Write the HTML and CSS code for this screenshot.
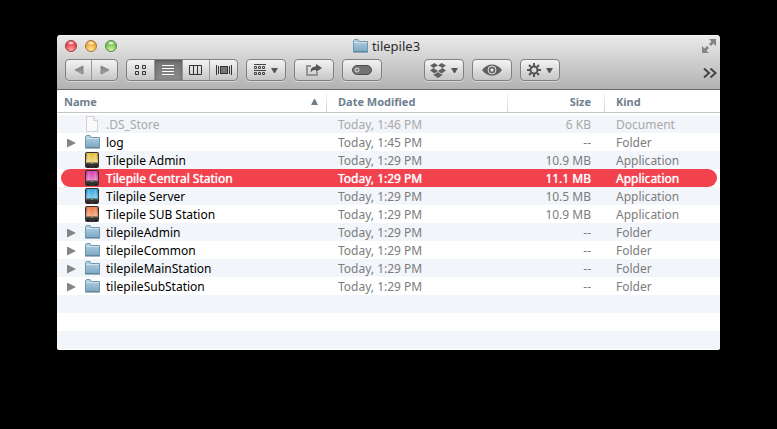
FILE: index.html
```html
<!DOCTYPE html>
<html lang="en">
<head>
<meta charset="utf-8">
<title>tilepile3</title>
<link rel="stylesheet" href="styles.css">
</head>
<body>
<svg class="defs" aria-hidden="true">
  <defs>
    <linearGradient id="folderFill" x1="0" y1="0" x2="0" y2="1"><stop offset="0" stop-color="#b4d2e4"/><stop offset="1" stop-color="#7da9c4"/></linearGradient>
    <linearGradient id="arrowFill" x1="0" y1="0" x2="0" y2="1"><stop offset="0" stop-color="#777"/><stop offset="1" stop-color="#aaa"/></linearGradient>
    <linearGradient id="shine" x1="0" y1="0" x2="0" y2="1"><stop offset="0" stop-color="#fff" stop-opacity="0"/><stop offset="1" stop-color="#fff" stop-opacity=".4"/></linearGradient>
    <symbol id="folder" viewBox="0 0 16 16">
      <path d="M1.5 13.5V2.5L2.5 1.5H6L7 3.5H15.500V13.500Z" fill="url(#folderFill)" stroke="#7197ae"/>
      <path d="M2 4.500H15" stroke="#cfe3ee"/>
      <path d="M1 14H16" stroke="#53778f"/>
    </symbol>
    <symbol id="doc" viewBox="0 0 16 16">
      <path d="M2.500.5H9.500L13.500 4.500V15.500H2.500Z" fill="#fafafa" stroke="#d2d2d2"/>
      <path d="M9.500.5V4.500H13.500" fill="#eee" stroke="#d2d2d2"/>
    </symbol>
    <symbol id="drive" viewBox="0 0 16 16">
      <rect x="1" y="0" width="14" height="16" rx="2" fill="#34302f"/>
      <path d="M2.500 1H13.500L14 10.500H2Z" fill="currentColor"/>
      <path d="M2.500 1H13.500L14 10.500H2Z" fill="url(#shine)"/>
      <path d="M5 1.500V10M11 1.500V10" stroke="#fff" stroke-opacity=".25"/>
      <path d="M1.500 11.500H14.500" stroke="#4d4d4d"/>
      <path d="M7 11.500H9" stroke="#54a34c"/>
      <path d="M3 14.500H5M11 14.500H13" stroke="#111"/>
    </symbol>
  </defs>
</svg>
<main class="window">
  <header class="chrome">
    <div class="titlebar">
      <div class="lights">
        <button class="light close" aria-label="Close"></button>
        <button class="light minimize" aria-label="Minimize"></button>
        <button class="light zoom" aria-label="Zoom"></button>
      </div>
      <h1 class="title"><svg class="icon16"><use href="#folder"/></svg>tilepile3</h1>
      <button class="bare fullscreen" aria-label="Full screen">
        <svg width="14" height="14" viewBox="0 0 14 14" fill="#858585"><path d="M7 0H14V7L11.500 4.500L9 7L7 5L9.500 2.500ZM7 14H0V7L2.500 9.500L5 7L7 9L4.500 11.500Z"/></svg>
      </button>
    </div>
    <div class="toolbar">
      <div class="group nav">
        <button aria-label="Back"><svg width="10" height="10"><path d="M9 1V9L1 5Z" fill="url(#arrowFill)" stroke="#888"/></svg></button>
        <button aria-label="Forward"><svg width="10" height="10"><path d="M1 1V9L9 5Z" fill="url(#arrowFill)" stroke="#888"/></svg></button>
      </div>
      <div class="group views">
        <button aria-label="Icon view"><svg width="11" height="11" fill="none" stroke="#333"><path d="M.5.5h3v3h-3zM7.500.5h3v3h-3zM.5 6.500h3v3h-3zM7.500 6.500h3v3h-3z"/></svg></button>
        <button class="active" aria-label="List view" aria-pressed="true"><svg width="12" height="12" stroke="#fff"><path d="M0 1.500H12M0 4.500H12M0 7.500H12M0 10.500H12"/></svg></button>
        <button aria-label="Column view"><svg width="13" height="11" fill="none" stroke="#333"><path d="M.5.5h12v9H.5zM4.500.5v9M8.500.5v9"/></svg></button>
        <button aria-label="Cover flow view"><svg width="16" height="11" stroke="#333"><path d="M.5.0v10M2.500 1v8M13.500 1v8M15.500 0v10"/><rect x="4.500" y="1.500" width="7" height="7" fill="#777"/></svg></button>
      </div>
      <button class="tool" aria-label="Arrange">
        <svg width="12" height="12" fill="none" stroke="#444"><path d="M0 .5H12M0 6.500H12M.5 2.500h2v2h-2zM4.500 2.500h2v2h-2zM8.500 2.500h2v2h-2zM.5 8.500h2v2h-2zM4.500 8.500h2v2h-2zM8.500 8.500h2v2h-2z"/></svg>
        <svg class="caret" width="7" height="5"><path d="M0 0H7L4 5H3Z" fill="#555"/></svg>
      </button>
      <button class="tool" aria-label="Share">
        <svg width="16" height="14"><path d="M5 3H1V12H11V9" fill="none" stroke="#949494" stroke-width="2"/><path d="M10 1L16 5L10 9V7C7 6.500 5.500 8 5 9.500C4 5.500 6.500 3.500 10 3.500Z" fill="#565656"/></svg>
      </button>
      <button class="tool" aria-label="Edit tags">
        <svg width="20" height="10"><rect x=".5" y=".5" width="19" height="9" rx="4.500" fill="#737373" stroke="#4f4f4f"/><circle cx="5" cy="5" r="2" fill="#777" stroke="#e6e6e6"/></svg>
      </button>
      <button class="tool apart" aria-label="Dropbox">
        <svg width="16" height="15" fill="#606060"><path d="M0 2.500L4.500 0L8 2.500L3.500 5ZM16 2.500L11.500 0L8 2.500L12.500 5ZM0 7.500L3.500 5L8 8L4.500 10.500ZM16 7.500L12.500 5L8 8L11.500 10.500ZM3.500 11L4.500 11.500L8 9L11.500 11.500L12.500 11V12L8 15L3.500 12Z"/></svg>
        <svg class="caret" width="7" height="5"><path d="M0 0H7L4 5H3Z" fill="#555"/></svg>
      </button>
      <button class="tool" aria-label="Quick Look">
        <svg width="20" height="12"><path d="M0 6C5-1.500 15-1.500 20 6C15 13.500 5 13.500 0 6Z" fill="#606060"/><circle cx="10" cy="6" r="4" fill="#6a6a6a" stroke="#dcdcdc"/><circle cx="10" cy="6" r="1.500" fill="#eee"/></svg>
      </button>
      <button class="tool" aria-label="Action">
        <svg width="14" height="14" viewBox="-7 -7 14 14" fill="none" stroke="#555"><circle r="3.500" stroke-width="2"/><path stroke-width="2" d="M0-4V-7M0 4V7M4 0H7M-4 0H-7M3 3L5 5M-3-3L-5-5M3-3L5-5M-3 3L-5 5"/></svg>
        <svg class="caret" width="7" height="5"><path d="M0 0H7L4 5H3Z" fill="#555"/></svg>
      </button>
      <button class="bare more" aria-label="More toolbar items">
        <svg width="14" height="10" fill="none" stroke="#444" stroke-width="2"><path d="M1 .5L6 5L1 9.500M7.500.5L12.500 5L7.500 9.500"/></svg>
      </button>
    </div>
  </header>
  <table class="files">
    <colgroup><col><col class="c-date"><col class="c-size"><col class="c-kind"></colgroup>
    <thead>
      <tr>
        <th class="name" scope="col" aria-sort="ascending"><span class="sort">Name<svg width="7" height="6"><path d="M3 0H4L7 6H0Z" fill="#6f7f8e"/></svg></span></th>
        <th scope="col">Date Modified</th><th class="size" scope="col">Size</th><th scope="col">Kind</th>
      </tr>
    </thead>
    <tbody>
      <tr class="dim"><td><div class="entry"><span class="twist"></span><svg class="icon16"><use href="#doc"/></svg>.DS_Store</div></td><td>Today, 1:46 PM</td><td class="size">6 KB</td><td>Document</td></tr>
      <tr><td><div class="entry"><button class="twist" aria-label="Expand log"></button><svg class="icon16"><use href="#folder"/></svg>log</div></td><td>Today, 1:45 PM</td><td class="size">--</td><td>Folder</td></tr>
      <tr><td><div class="entry"><span class="twist"></span><svg class="icon16 yellow"><use href="#drive"/></svg>Tilepile Admin</div></td><td>Today, 1:29 PM</td><td class="size">10.9 MB</td><td>Application</td></tr>
      <tr class="selected" aria-selected="true"><td><div class="entry"><span class="twist"></span><svg class="icon16 pink"><use href="#drive"/></svg>Tilepile Central Station</div></td><td>Today, 1:29 PM</td><td class="size">11.1 MB</td><td>Application</td></tr>
      <tr><td><div class="entry"><span class="twist"></span><svg class="icon16 blue"><use href="#drive"/></svg>Tilepile Server</div></td><td>Today, 1:29 PM</td><td class="size">10.5 MB</td><td>Application</td></tr>
      <tr><td><div class="entry"><span class="twist"></span><svg class="icon16 orange"><use href="#drive"/></svg>Tilepile SUB Station</div></td><td>Today, 1:29 PM</td><td class="size">10.9 MB</td><td>Application</td></tr>
      <tr><td><div class="entry"><button class="twist" aria-label="Expand tilepileAdmin"></button><svg class="icon16"><use href="#folder"/></svg>tilepileAdmin</div></td><td>Today, 1:29 PM</td><td class="size">--</td><td>Folder</td></tr>
      <tr><td><div class="entry"><button class="twist" aria-label="Expand tilepileCommon"></button><svg class="icon16"><use href="#folder"/></svg>tilepileCommon</div></td><td>Today, 1:29 PM</td><td class="size">--</td><td>Folder</td></tr>
      <tr><td><div class="entry"><button class="twist" aria-label="Expand tilepileMainStation"></button><svg class="icon16"><use href="#folder"/></svg>tilepileMainStation</div></td><td>Today, 1:29 PM</td><td class="size">--</td><td>Folder</td></tr>
      <tr><td><div class="entry"><button class="twist" aria-label="Expand tilepileSubStation"></button><svg class="icon16"><use href="#folder"/></svg>tilepileSubStation</div></td><td>Today, 1:29 PM</td><td class="size">--</td><td>Folder</td></tr>
      <tr><td></td><td></td><td></td><td></td></tr>
      <tr><td></td><td></td><td></td><td></td></tr>
      <tr><td></td><td></td><td></td><td></td></tr>
    </tbody>
  </table>
</main>
</body>
</html>
```
FILE: styles.css
```css
* { box-sizing: border-box; }
body {
  margin: 0;
  padding: 35px 57px;
  background: #000;
  font-family: "Noto Sans", "Open Sans", sans-serif;
  font-size: 12px;
}
button { margin: 0; padding: 0; border: 0; background: none; font: inherit; }
svg { display: block; flex: none; }
.defs { position: absolute; width: 0; height: 0; }
.icon16 { width: 16px; height: 16px; }

.window { background: #fff; border-radius: 4px 4px 2px 2px; overflow: hidden; padding-bottom: 1px; }
.chrome {
  height: 55px;
  padding: 0 3px 0 8px;
  background: linear-gradient(#ebebeb, #d4d4d4 40%, #b2b2b2);
  border-bottom: 1px solid #686868;
  box-shadow: inset 0 1px #f6f6f6;
}
.titlebar { display: grid; grid-template-columns: 1fr auto 1fr; align-items: center; height: 22px; }
.lights { display: flex; gap: 8px; }
.light { width: 12px; height: 12px; border-radius: 50%; border: 1px solid; }
.close { background: radial-gradient(ellipse 4px 2px at 5px 2px, #fff, transparent), radial-gradient(circle at 5px 9px, #ffaaa5, #e9414a 65%); border-color: #a23a3d; }
.minimize { background: radial-gradient(ellipse 4px 2px at 5px 2px, #fff, transparent), radial-gradient(circle at 5px 9px, #ffe9a0, #eca838 65%); border-color: #a9742d; }
.zoom { background: radial-gradient(ellipse 4px 2px at 5px 2px, #fff, transparent), radial-gradient(circle at 5px 9px, #d4f5ae, #77bd50 65%); border-color: #56893f; }
.title { display: flex; align-items: center; gap: 4px; margin: 0; padding-right: 10px; font-size: 13px; font-weight: 400; color: #2b2b2b; }
.fullscreen { justify-self: end; margin-right: 1px; }

.toolbar { display: flex; align-items: center; gap: 8px; padding-top: 2px; }
.group, .tool {
  display: flex;
  height: 22px;
  border: 1px solid #808080;
  border-radius: 4px;
  background: linear-gradient(#f4f4f4, #c6c6c6);
  box-shadow: 0 1px #d8d8d8;
}
.group { overflow: hidden; }
.group button { flex: 1; display: flex; align-items: center; justify-content: center; }
.group button + button { border-left: 1px solid #999; }
.nav { width: 53px; }
.views { width: 112px; }
.group .active { background: linear-gradient(#727272, #8c8c8c); box-shadow: inset 0 1px 3px #555; }
.tool { width: 40px; align-items: center; justify-content: center; gap: 5px; }
.apart { margin-left: 34px; }
.more { margin-left: auto; padding-top: 5px; }

.files { width: 100%; table-layout: fixed; border-spacing: 0; color: #7c7c7c; }
.c-date { width: 181px; }
.c-size { width: 97px; }
.c-kind { width: 115px; }
th {
  height: 25px;
  padding: 0 13px 2px 11px;
  text-align: left;
  font-size: 11px;
  line-height: 20px;
  color: #6f7f8e;
  background:
    linear-gradient(#c6c6c6, #c6c6c6) 0 22px / 100% 1px no-repeat,
    linear-gradient(#fff, #d0d0d0) 100% 0 / 1px 22px no-repeat;
}
th:last-child { background: linear-gradient(#c6c6c6, #c6c6c6) 0 22px / 100% 1px no-repeat; }
.sort { display: flex; align-items: center; justify-content: space-between; }
th.name { padding: 0 9px 2px 7px; }
td { height: 18px; padding: 2px 13px 0 11px; line-height: 16px; white-space: nowrap; }
td:first-child { padding: 0 0 0 9px; color: #000; }
th.size, td.size { text-align: right; padding-right: 14px; }
tbody tr:nth-child(odd) { background: #f2f5fa; }
.entry { display: flex; align-items: center; height: 18px; line-height: 16px; padding-top: 2px; }
.entry .icon16 { margin: -1px 6px 1px 8px; }
.twist { width: 10px; height: 16px; }
button.twist::before { content: ""; display: block; width: 9px; height: 9px; margin-left: 1px; background: #858585; clip-path: polygon(0 0, 100% 50%, 0 100%); }
.dim td, .dim td:first-child { color: #a9a9a9; }
.selected td, .selected td:first-child { position: relative; isolation: isolate; color: #fff; text-shadow: 0 0 1px #fff; }
.selected td::before { content: ""; position: absolute; z-index: -1; inset: 0; background: #f1424e; }
.selected td:first-child::before { left: 4px; border-radius: 9px 0 0 9px; }
.selected td:last-child::before { right: 3px; border-radius: 0 9px 9px 0; }
.yellow { color: #e3bf3f; }
.pink { color: #d63fae; }
.blue { color: #35a9e0; }
.orange { color: #ec7a45; }
```
